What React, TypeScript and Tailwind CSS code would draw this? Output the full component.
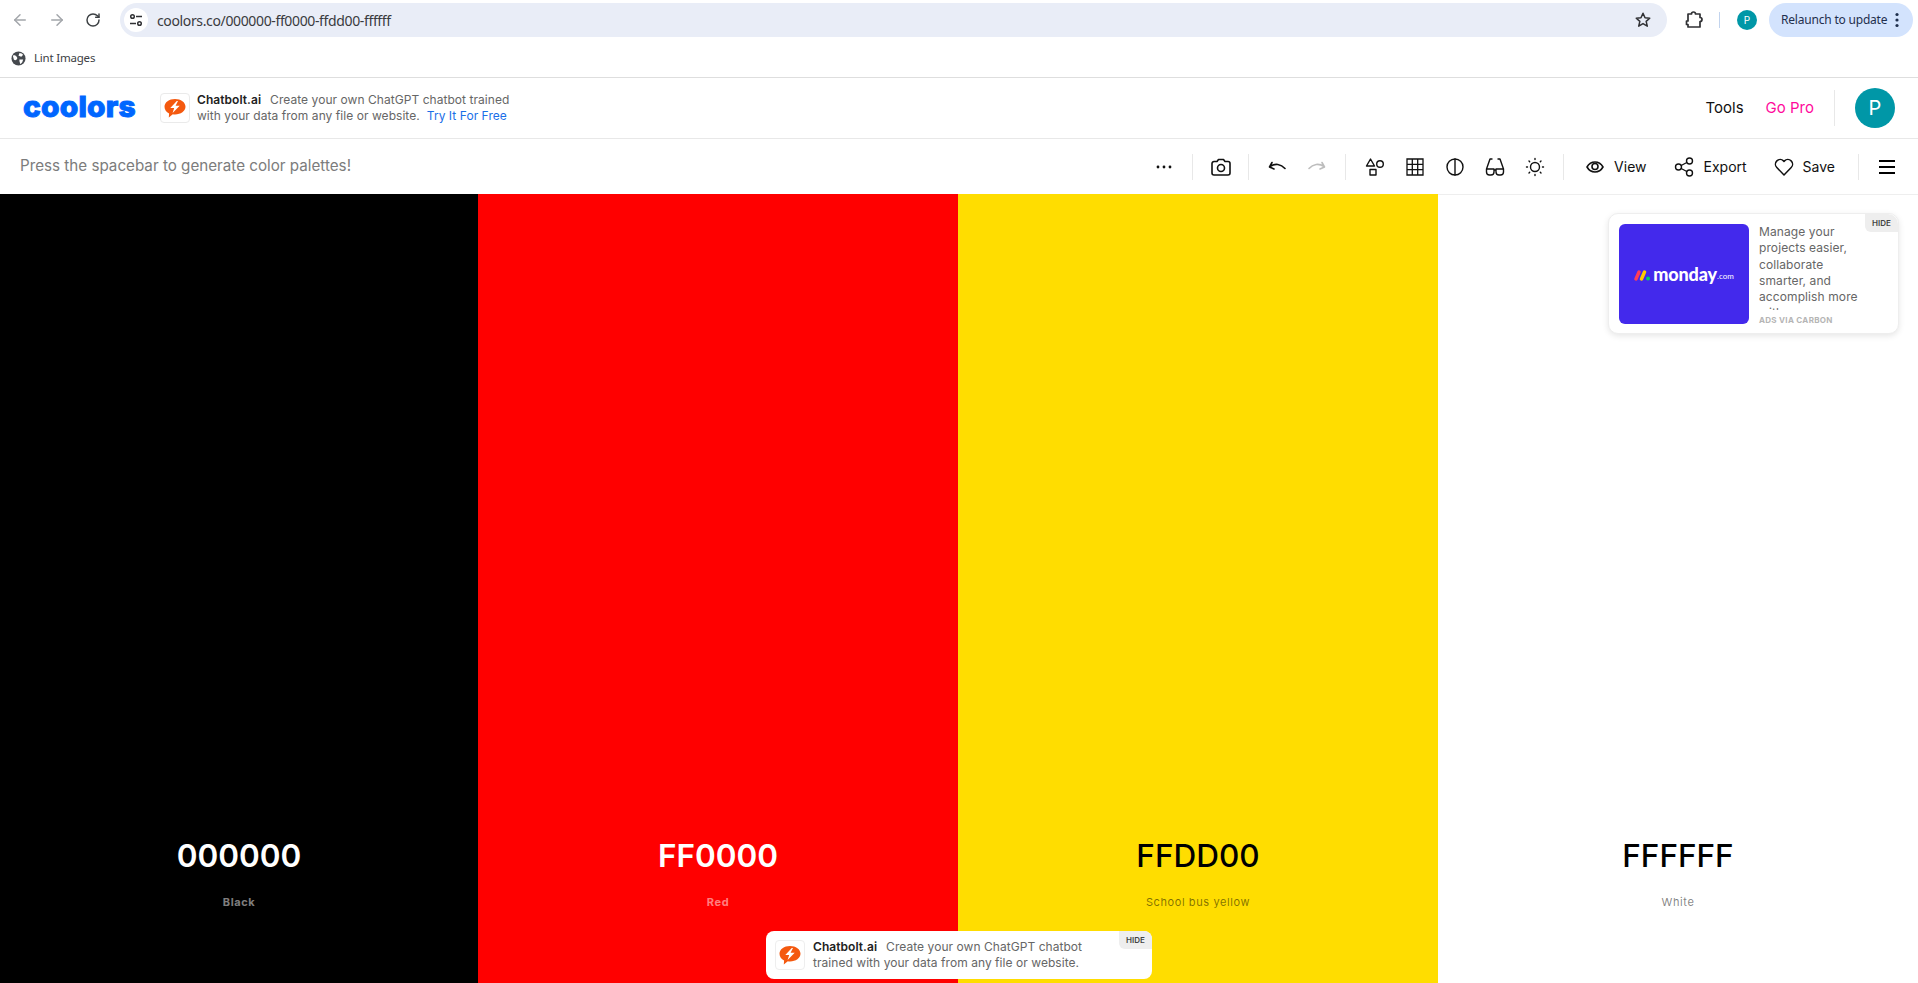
import React from "react";
import { ArrowLeft, ArrowRight, RotateCw } from "lucide-react";

const Ic = ({ s = 20, children, sw = 1.6, className = "" }: { s?: number; children: React.ReactNode; sw?: number; className?: string }) => (
  <svg width={s} height={s} viewBox="0 0 20 20" fill="none" stroke="currentColor" strokeWidth={sw} strokeLinecap="round" strokeLinejoin="round" className={className}>
    {children}
  </svg>
);

const Sep = ({ className = "" }: { className?: string }) => <div className={`w-px h-[26px] bg-[#e8e8e8] shrink-0 ${className}`} />;

const Slot = ({ children, className = "" }: { children: React.ReactNode; className?: string }) => (
  <div className={`w-10 h-10 flex items-center justify-center shrink-0 ${className}`}>{children}</div>
);

const Bolt = () => (
  <svg width="22" height="20" viewBox="0 0 22 20">
    <path d="M11 1c5.800 0 10.500 3.300 10.500 7.800 0 4.400-4.700 7.700-10.500 7.700-.8 0-1.500 0-2.200-.2L4.800 19.500l.3-4C2.300 14.100.5 11.700.5 8.800.5 4.300 5.200 1 11 1z" fill="#f4590f" />
    <path d="M12.800 3 6.300 10h3.900l-1.600 5 7.100-7.200h-4.100L14 3z" fill="#fff" />
  </svg>
);

function Column({ bg, hex, name, hexColor, nameColor, weight, hexWeight, className = "flex-1" }: { bg: string; hex: string; name: string; hexColor: string; nameColor: string; weight: string; hexWeight: string; className?: string }) {
  return (
    <div className={`flex flex-col items-center justify-end pb-[73px] ${className} ${bg}`}>
      <div className={`text-[31.5px] leading-[40px] ${hexWeight} ${hexColor}`}>{hex}</div>
      <div className={`mt-[18px] text-[11px] leading-[16px] tracking-[0.6px] ${weight} ${nameColor}`}>{name}</div>
    </div>
  );
}

export default function App() {
  return (
    <div className="w-full h-[983px] overflow-hidden bg-white relative font-['Inter',sans-serif] text-black">
      {/* browser toolbar */}
      <div className="h-[38px] flex items-start">
        <div className="flex items-center h-[40px] shrink-0 pl-[10px] text-[#a3a6ab]">
          <div className="w-[20px] flex justify-center"><ArrowLeft size={18} strokeWidth={2} /></div>
          <div className="w-[20px] ml-[17px] flex justify-center"><ArrowRight size={18} strokeWidth={2} /></div>
          <div className="w-[20px] ml-[16px] flex justify-center text-[#3c4043]"><RotateCw size={16} strokeWidth={2.2} /></div>
        </div>
        <div className="mt-[3px] ml-[17px] w-[1547px] h-[34px] rounded-full bg-[#e9edf7] flex items-center pl-[4px] pr-[15px] shrink-0">
          <div className="w-[24px] h-[24px] rounded-full bg-white flex items-center justify-center shrink-0 text-[#303134]">
            <svg width="14" height="14" viewBox="0 0 14 14" fill="none" stroke="currentColor" strokeWidth="1.5">
              <circle cx="3.500" cy="3.500" r="1.800" /><path d="M7 3.500h6M1 10.500h6" /><circle cx="10.500" cy="10.500" r="1.800" />
            </svg>
          </div>
          <div className="ml-[9px] text-[14px] font-['Noto_Sans',sans-serif] text-[#3a3b3e] tracking-[-0.36px] whitespace-nowrap">coolors.co/000000-ff0000-ffdd00-ffffff</div>
          <svg className="ml-auto text-[#303134]" width="18" height="18" viewBox="0 0 24 24" fill="none" stroke="currentColor" strokeWidth="2" strokeLinejoin="round">
            <path d="M12 3l2.700 6 6.300.6-4.800 4.200 1.500 6.400L12 16.800l-5.700 3.400 1.500-6.400L3 9.600 9.300 9z" />
          </svg>
        </div>
        <div className="mt-[3px] h-[34px] flex items-center shrink-0 ml-[18px] text-[#303134]">
          <svg width="18" height="18" viewBox="0 0 18 18" fill="none" stroke="currentColor" strokeWidth="1.700" strokeLinejoin="round">
            <path d="M3 3h3.500a2 2 0 0 1 4 0H15v3.500a2 2 0 0 1 0 4V16H3v-2.500H1.500V10H3z" />
          </svg>
          <div className="w-px h-[16px] bg-[#c2d4ee] ml-[16px]" />
          <div className="ml-[17px] w-[20px] h-[20px] rounded-full bg-[#0097a7] text-white text-[10px] flex items-center justify-center">P</div>
          <div className="ml-[12px] w-[144px] h-[34px] rounded-full bg-[#d3e3fd] flex items-center pl-[12px] text-[12px] text-[#1f2f4d] font-['Noto_Sans',sans-serif] tracking-[-0.2px] whitespace-nowrap">
            Relaunch to update
            <svg className="ml-[8px] text-[#1f2f4d]" width="4" height="16" viewBox="0 0 4 16" fill="currentColor"><circle cx="2" cy="2.500" r="1.600" /><circle cx="2" cy="8" r="1.600" /><circle cx="2" cy="13.500" r="1.600" /></svg>
          </div>
        </div>
      </div>
      {/* bookmarks */}
      <div className="h-[40px] border-b border-[#dedede] flex items-center pl-[11px] pt-[1px]">
        <svg width="15" height="15" viewBox="0 0 16 16" className="text-[#45494e]">
          <circle cx="8" cy="8" r="7.500" fill="currentColor" />
          <path d="M2 5c2-1 3 0 4 1s1 2 0 3-2 1-3 0zM9 2c2 0 3 1 4 2l-2 2-3-1zM9 9h4l-1 3-2 2-1-3z" fill="#fff" />
        </svg>
        <span className="ml-[8px] text-[11.5px] text-[#3c4043] font-['Noto_Sans',sans-serif] tracking-[-0.2px]">Lint Images</span>
      </div>
      {/* site header */}
      <div className="h-[61px] border-b border-[#e8e8e8] flex items-center pl-[23px] pr-[23px]">
        <div className="w-[110px] text-[#0066ff] text-[29px] leading-none font-extrabold tracking-[0.2px] origin-left scale-x-[1.03] [-webkit-text-stroke:1px_#0066ff] shrink-0 -mt-[3px]">coolors</div>
        <div className="ml-[27px] w-[30px] h-[30px] rounded-[4px] border border-[#eaeaea] flex items-center justify-center shrink-0"><Bolt /></div>
        <div className="ml-[7px] text-[12px] leading-[16px] text-[#666] whitespace-nowrap tracking-[0.05px]">
          <div><span className="font-semibold text-[#222] mr-[9px]">Chatbolt.ai</span>Create your own ChatGPT chatbot trained</div>
          <div>with your data from any file or website.<span className="ml-[7px] text-[#1a6fe8]">Try It For Free</span></div>
        </div>
        <div className="ml-auto text-[15px] text-[#111]">Tools</div>
        <div className="ml-[22px] text-[15px] text-[#ff0a9c]">Go Pro</div>
        <div className="ml-[20px] w-px h-[36px] bg-[#e8e8e8]" />
        <div className="ml-[20px] w-[40px] h-[40px] rounded-full bg-[#0097a7] text-white text-[20px] flex items-center justify-center">P</div>
      </div>
      {/* tools bar */}
      <div className="h-[55px] flex items-center pl-[20px] pr-[11px] text-[#111]">
        <div className="text-[15.2px] text-[#7c7c7c]">Press the spacebar to generate color palettes!</div>
        <div className="ml-auto flex items-center">
          <Slot><svg width="16" height="4" viewBox="0 0 16 4" fill="currentColor"><circle cx="2" cy="2" r="1.400" /><circle cx="8" cy="2" r="1.400" /><circle cx="14" cy="2" r="1.400" /></svg></Slot>
          <Sep className="ml-[8px]" />
          <Slot className="ml-[8px]"><Ic s={20}><path d="M6 4.500 7.500 2.500h5L14 4.500h3a2 2 0 0 1 2 2V16a2 2 0 0 1-2 2H3a2 2 0 0 1-2-2V6.500a2 2 0 0 1 2-2z" /><circle cx="10" cy="11" r="3.500" /></Ic></Slot>
          <Sep className="ml-[7px]" />
          <Slot className="ml-[8px]"><Ic s={20}><path d="M5 5.500 2.500 10 7 12M3 9.500c5-3.500 11-2.500 15 2" /></Ic></Slot>
          <Slot className="text-[#bdbdbd]"><Ic s={20}><path d="M15 5.500 17.500 10 13 12M17 9.500c-5-3.500-11-2.500-15 2" /></Ic></Slot>
          <Sep className="ml-[8px]" />
          <Slot className="ml-[9px]"><Ic s={20} sw={1.400}><path d="M5.500 2 9.500 9h-8zM5 12.500h6V18H5z" /><circle cx="15" cy="7" r="3.300" /></Ic></Slot>
          <Slot><Ic s={20} sw={1.300}><path d="M2 2h16v16H2zM7.300 2v16M12.700 2v16M2 7.300h16M2 12.700h16" strokeLinecap="butt" strokeLinejoin="miter" /></Ic></Slot>
          <Slot><Ic s={20} sw={1.400}><circle cx="10" cy="10" r="8" /><path d="M10 2v16" /></Ic></Slot>
          <Slot><Ic s={20} sw={1.400}><path d="M7 2H5L1.500 12M13 2h2l3.500 10M1.500 12h7.500v3a3 3 0 0 1-3 3H4.500a3 3 0 0 1-3-3zM11 12h7.500v3a3 3 0 0 1-3 3H14a3 3 0 0 1-3-3zM9 13h2" /></Ic></Slot>
          <Slot><Ic s={20} sw={1.400}><circle cx="10" cy="10" r="4.500" /><path d="M10 1.500v1M10 17.500v1M1.500 10h1M17.500 10h1M4 4l.7.7M15.300 15.300l.7.7M16 4l-.7.7M4.700 15.300 4 16" /></Ic></Slot>
          <Sep className="ml-[8px]" />
          <Ic s={20} className="ml-[21px] shrink-0"><path d="M2 10c2-3.500 4.800-5 8-5s6 1.500 8 5c-2 3.500-4.800 5-8 5s-6-1.500-8-5z" /><circle cx="10" cy="9.500" r="3" /></Ic>
          <span className="ml-[9px] text-[14px] -mt-[1px]">View</span>
          <Ic s={20} className="ml-[27px] shrink-0" sw={1.400}><circle cx="4.500" cy="10" r="3" /><circle cx="15.500" cy="4" r="3" /><circle cx="15.500" cy="16" r="3" /><path d="M7.200 8.500l5.600-3M7.200 11.500l5.600 3" /></Ic>
          <span className="ml-[10px] text-[14px] -mt-[1px]">Export</span>
          <Ic s={20} className="ml-[27px] shrink-0" sw={1.500}><path d="M10 18 2.800 10.500a4.700 4.700 0 0 1 6.700-6.600l.5.600.5-.6a4.700 4.700 0 0 1 6.700 6.600z" /></Ic>
          <span className="ml-[9px] text-[14px] -mt-[1px]">Save</span>
          <Sep className="ml-[23px]" />
          <Slot className="ml-[8px]">
            <div className="w-[16px] h-[14px] flex flex-col justify-between"><div className="h-[2px] bg-black" /><div className="h-[2px] bg-black" /><div className="h-[2px] bg-black" /></div>
          </Slot>
        </div>
      </div>
      {/* palette */}
      <div className="h-[789px] flex">
        <Column className="w-[478px] shrink-0" bg="bg-black" hex="000000" name="Black" hexColor="text-white" nameColor="text-white/50" weight="font-bold" hexWeight="font-semibold" />
        <Column bg="bg-[#ff0000]" hex="FF0000" name="Red" hexColor="text-white" nameColor="text-white/50" weight="font-bold" hexWeight="font-semibold" />
        <Column bg="bg-[#ffdd00]" hex="FFDD00" name="School bus yellow" hexColor="text-black" nameColor="text-black/50" weight="font-normal" hexWeight="font-medium" />
        <Column className="flex-1 border-t border-[#eeeeee]" bg="bg-white" hex="FFFFFF" name="White" hexColor="text-black" nameColor="text-black/50" weight="font-normal" hexWeight="font-medium" />
      </div>

      {/* top ad */}
      <div className="absolute left-[1608px] top-[213px] w-[291px] h-[121px] bg-white rounded-[10px] border border-[#eeeeee] shadow-[0_2px_6px_rgba(0,0,0,0.1)] flex pl-[10px] pt-[10px]">
        <div className="w-[130px] h-[100px] rounded-[6px] bg-[#4329ec] flex items-center justify-center shrink-0 text-white">
          <svg width="17" height="12" viewBox="0 0 17 12" className="mt-[1px]">
            <path d="M2 10 5 3" stroke="#ff3d57" strokeWidth="3.400" strokeLinecap="round" />
            <path d="M7.500 10l3-7" stroke="#ffcb00" strokeWidth="3.400" strokeLinecap="round" />
            <circle cx="14" cy="9.500" r="2" fill="#00d26a" />
          </svg>
          <span className="ml-[2px] text-[18px] font-black leading-none font-['Lato',sans-serif] tracking-[-0.1px]">monday</span>
          <span className="text-[8px] mt-[4px] leading-none font-['Lato',sans-serif]">.com</span>
        </div>
        <div className="ml-[10px] w-[100px] flex flex-col">
          <div className="h-[86px] overflow-hidden text-[12px] leading-[16.300px] text-[#666] tracking-[0.1px]">
            Manage your projects easier, collaborate smarter, and accomplish more with monday.com
          </div>
          <div className="mt-[4px] text-[8px] leading-[12px] font-bold text-[#b5b5b5] tracking-[0.3px] whitespace-nowrap">ADS VIA CARBON</div>
        </div>
        <div className="absolute right-0 top-0 w-[33px] h-[18px] bg-[#eeeeee] rounded-bl-[6px] rounded-tr-[10px] text-[8px] font-semibold text-[#444] flex items-center justify-center">HIDE</div>
      </div>

      {/* bottom ad */}
      <div className="absolute left-[766px] top-[931px] w-[386px] h-[48px] bg-white rounded-[8px] flex items-center pl-[9px]">
        <div className="w-[30px] h-[30px] rounded-[4px] border border-[#eeeeee] flex items-center justify-center shrink-0"><Bolt /></div>
        <div className="ml-[8px] text-[12px] leading-[16px] text-[#666] whitespace-nowrap tracking-[0.05px]">
          <div><span className="font-semibold text-[#222] mr-[9px]">Chatbolt.ai</span>Create your own ChatGPT chatbot</div>
          <div>trained with your data from any file or website.</div>
        </div>
        <div className="absolute right-0 top-0 w-[33px] h-[18px] bg-[#eeeeee] rounded-bl-[6px] rounded-tr-[8px] text-[8px] font-semibold text-[#444] flex items-center justify-center">HIDE</div>
      </div>
    </div>
  );
}
